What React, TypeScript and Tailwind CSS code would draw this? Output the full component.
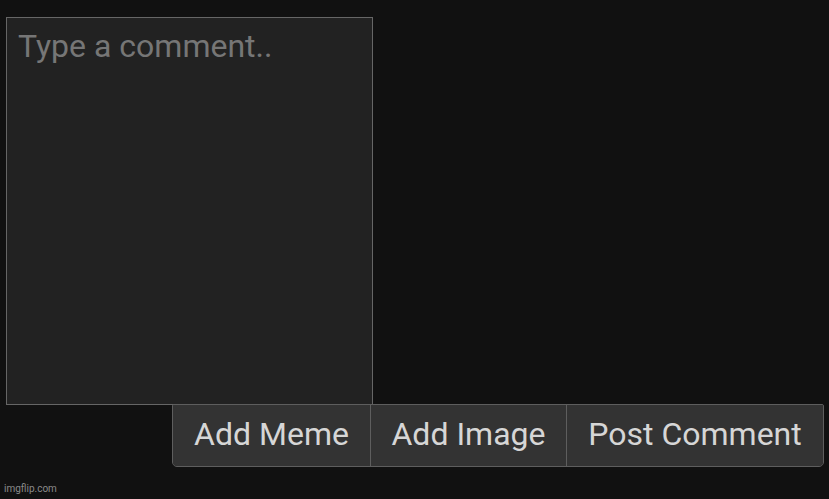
export default function App() {
  const buttons = ["Add Meme", "Add Image", "Post Comment"];

  return (
    <div
      className="relative w-[829px] h-[499px] bg-[#111111] overflow-hidden"
      style={{ fontFamily: "Roboto, 'Noto Sans', sans-serif" }}
    >
      <div className="flex flex-col pt-[17px] pl-[6px] pr-[5px]">
        <textarea
          placeholder="Type a comment.."
          className="w-[367px] h-[388px] resize-none bg-[#222222] border border-[#666666] px-[11px] pt-[8px] text-[32px] leading-[40px] text-[#cccccc] placeholder:text-[#767676] outline-none"
        />
        <div className="flex self-end -mt-[1px] border border-[#5e5e5e] rounded-b-[5px] rounded-t-[2px] bg-[#333333] overflow-hidden">
          {buttons.map((label, i) => (
            <button
              key={label}
              className={`h-[61px] pb-[3px] text-[32px] text-[#d6d6d6] bg-[#333333] ${
                i > 0 ? "border-l border-[#5e5e5e]" : ""
              } ${i === 0 ? "w-[197px]" : i === 1 ? "w-[196px]" : "w-[257px]"}`}
            >
              {label}
            </button>
          ))}
        </div>
      </div>
      <div className="absolute left-[4px] bottom-[3px] text-[10px] text-[#8a8a8a]">
        imgflip.com
      </div>
    </div>
  );
}
